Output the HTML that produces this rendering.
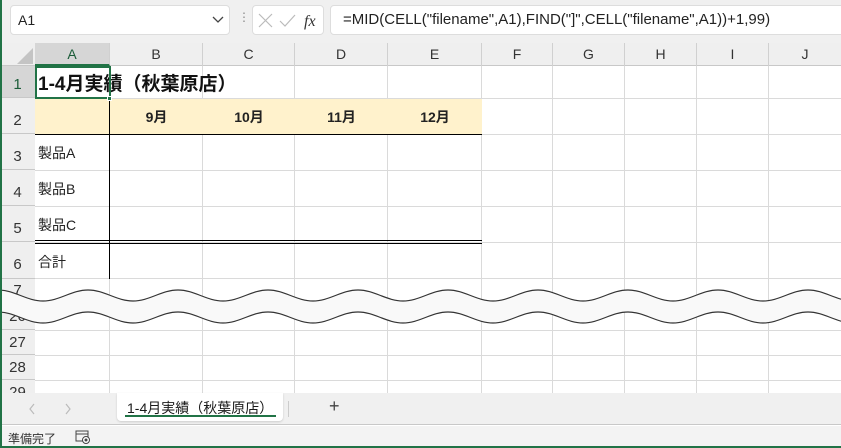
<!DOCTYPE html>
<html><head><meta charset="utf-8"><style>
*{margin:0;padding:0;box-sizing:border-box}
body{width:841px;height:448px;overflow:hidden;background:#fff;font-family:"Liberation Sans","Noto Sans CJK JP",sans-serif;position:relative}
.a{position:absolute}
.ch{position:absolute;top:43px;height:23px;font-size:14px;color:#333;text-align:center;line-height:23px;border-right:1px solid #d0d0d0}
.rh{position:absolute;left:0;width:35px;font-size:15px;color:#333;text-align:center;border-bottom:1px solid #c8c8c8;background:#efefef}
.vl{position:absolute;width:1px;background:#dadada}
.hl{position:absolute;height:1px;background:#dadada}
.t{position:absolute;font-size:14px;color:#222}
</style></head><body>
<div class="a" style="left:0;top:0;width:841px;height:43px;background:#f0f0f0"></div>
<div class="a" style="left:10px;top:5px;width:220px;height:30px;background:#fff;border:1px solid #ddd;border-radius:4px;font-size:14px;line-height:28px;padding-left:7px;color:#222">A1</div>
<svg class="a" style="left:212px;top:16px" width="12" height="8"><path d="M1 1L6 6L11 1" stroke="#444" stroke-width="1.3" fill="none"/></svg>
<div class="a" style="left:238px;top:10px;font-size:12px;color:#888">&#8942;</div>
<div class="a" style="left:252px;top:5px;width:72px;height:30px;background:#fff;border:1px solid #ddd;border-radius:4px"></div>
<svg class="a" style="left:258px;top:12px" width="60" height="18"><path d="M1 2L14 15M14 2L1 15" stroke="#bbb" stroke-width="1.2" fill="none"/><path d="M22 9L27 14L37 3" stroke="#bbb" stroke-width="1.2" fill="none"/><text x="46" y="14" font-family="Liberation Serif" font-style="italic" font-size="16" fill="#333">fx</text></svg>
<div class="a" style="left:330px;top:5px;width:520px;height:30px;background:#fff;border:1px solid #ddd;border-radius:4px;font-size:15px;line-height:28px;padding-left:12px;color:#222;white-space:nowrap">=MID(CELL("filename",A1),FIND("]",CELL("filename",A1))+1,99)</div>
<div class="a" style="left:0;top:43px;width:841px;height:23px;background:#efefef;border-bottom:1px solid #c8c8c8"></div>
<svg class="a" style="left:16px;top:47px" width="18" height="18"><path d="M17 1L17 17L1 17Z" fill="#c4c4c4"/></svg>
<div class="ch" style="left:35px;width:75px;background:#d6d6d6;color:#1a5c38;border-bottom:2px solid #217346;height:23px">A</div>
<div class="ch" style="left:110px;width:93px">B</div>
<div class="ch" style="left:203px;width:92px">C</div>
<div class="ch" style="left:295px;width:93px">D</div>
<div class="ch" style="left:388px;width:94px">E</div>
<div class="ch" style="left:482px;width:71px">F</div>
<div class="ch" style="left:553px;width:72px">G</div>
<div class="ch" style="left:625px;width:72px">H</div>
<div class="ch" style="left:697px;width:72px">I</div>
<div class="ch" style="left:769px;width:72px;border:0">J</div>
<div class="a" style="left:0;top:66px;width:35px;height:327px;background:#efefef;border-right:1px solid #c8c8c8"></div>
<div class="rh" style="top:66px;height:32px;line-height:38px;background:#d6d6d6;color:#1a5c38">1</div>
<div class="rh" style="top:98px;height:36px;line-height:46px">2</div>
<div class="rh" style="top:134px;height:36px;line-height:46px">3</div>
<div class="rh" style="top:170px;height:36px;line-height:46px">4</div>
<div class="rh" style="top:206px;height:36px;line-height:46px">5</div>
<div class="rh" style="top:242px;height:37px;line-height:46px">6</div>
<div class="rh" style="top:279px;height:51px;line-height:24px">7</div>
<div class="rh" style="top:330px;height:25px;line-height:26px">27</div>
<div class="rh" style="top:355px;height:25px;line-height:26px">28</div>
<div class="rh" style="top:380px;height:13px;line-height:26px;overflow:hidden;border:0">29</div>
<div class="a" style="left:0;top:308px;width:35px;font-size:15px;color:#333;text-align:center">26</div>
<div class="vl" style="left:202px;top:66px;height:327px"></div>
<div class="vl" style="left:294px;top:66px;height:327px"></div>
<div class="vl" style="left:387px;top:66px;height:327px"></div>
<div class="vl" style="left:481px;top:66px;height:327px"></div>
<div class="vl" style="left:552px;top:66px;height:327px"></div>
<div class="vl" style="left:624px;top:66px;height:327px"></div>
<div class="vl" style="left:696px;top:66px;height:327px"></div>
<div class="vl" style="left:768px;top:66px;height:327px"></div>
<div class="vl" style="left:109px;top:279px;height:114px"></div>
<div class="hl" style="left:35px;top:98px;width:806px"></div>
<div class="hl" style="left:35px;top:134px;width:806px"></div>
<div class="hl" style="left:35px;top:170px;width:806px"></div>
<div class="hl" style="left:35px;top:206px;width:806px"></div>
<div class="hl" style="left:35px;top:242px;width:806px"></div>
<div class="hl" style="left:35px;top:278px;width:806px"></div>
<div class="hl" style="left:35px;top:330px;width:806px"></div>
<div class="hl" style="left:35px;top:355px;width:806px"></div>
<div class="hl" style="left:35px;top:380px;width:806px"></div>
<div class="a" style="left:35px;top:99px;width:447px;height:35px;background:#fff2cc"></div>
<div class="a" style="left:35px;top:134px;width:447px;height:1px;background:#000"></div>
<div class="a" style="left:35px;top:240px;width:447px;height:1px;background:#000"></div>
<div class="a" style="left:35px;top:243px;width:447px;height:1px;background:#000"></div>
<div class="a" style="left:109px;top:99px;width:1px;height:180px;background:#000"></div>
<div class="t" style="left:38px;top:69px;font-size:19px;font-weight:bold;color:#111;white-space:nowrap">1-4月実績（秋葉原店）</div>
<div class="a" style="left:35px;top:66px;width:76px;height:33px;border:2px solid #217346"></div>
<div class="a" style="left:107px;top:96px;width:5px;height:5px;background:#217346;border:1px solid #fff"></div>
<div class="t" style="left:110px;top:107px;width:93px;text-align:center;font-weight:bold;font-size:14px">9月</div>
<div class="t" style="left:203px;top:107px;width:92px;text-align:center;font-weight:bold;font-size:14px">10月</div>
<div class="t" style="left:295px;top:107px;width:93px;text-align:center;font-weight:bold;font-size:14px">11月</div>
<div class="t" style="left:388px;top:107px;width:94px;text-align:center;font-weight:bold;font-size:14px">12月</div>
<div class="t" style="left:38px;top:143px">製品A</div>
<div class="t" style="left:38px;top:179px">製品B</div>
<div class="t" style="left:38px;top:215px">製品C</div>
<div class="t" style="left:38px;top:252px">合計</div>
<svg class="a" style="left:0;top:280px" width="841" height="50" viewBox="0 280 841 50">
<path d="M-2 290 C14.5 290 26.5 301 43 301 S71.5 290 88 290 S116.5 301 133 301 S161.5 290 178 290 S206.5 301 223 301 S251.5 290 268 290 S296.5 301 313 301 S341.5 290 358 290 S386.5 301 403 301 S431.5 290 448 290 S476.5 301 493 301 S521.5 290 538 290 S566.5 301 583 301 S611.5 290 628 290 S656.5 301 673 301 S701.5 290 718 290 S746.5 301 763 301 S791.5 290 808 290 S836.5 301 853 301 L853 323 C836.5 323 824.5 312 808 312 S779.5 323 763 323 S734.5 312 718 312 S689.5 323 673 323 S644.5 312 628 312 S599.5 323 583 323 S554.5 312 538 312 S509.5 323 493 323 S464.5 312 448 312 S419.5 323 403 323 S374.5 312 358 312 S329.5 323 313 323 S284.5 312 268 312 S239.5 323 223 323 S194.5 312 178 312 S149.5 323 133 323 S104.5 312 88 312 S59.5 323 43 323 S14.5 312 -2 312 Z" fill="#f9f9f9"/>
<path d="M-2 290 C14.5 290 26.5 301 43 301 S71.5 290 88 290 S116.5 301 133 301 S161.5 290 178 290 S206.5 301 223 301 S251.5 290 268 290 S296.5 301 313 301 S341.5 290 358 290 S386.5 301 403 301 S431.5 290 448 290 S476.5 301 493 301 S521.5 290 538 290 S566.5 301 583 301 S611.5 290 628 290 S656.5 301 673 301 S701.5 290 718 290 S746.5 301 763 301 S791.5 290 808 290 S836.5 301 853 301" fill="none" stroke="#333" stroke-width="1.2"/>
<path d="M-2 312 C14.5 312 26.5 323 43 323 S71.5 312 88 312 S116.5 323 133 323 S161.5 312 178 312 S206.5 323 223 323 S251.5 312 268 312 S296.5 323 313 323 S341.5 312 358 312 S386.5 323 403 323 S431.5 312 448 312 S476.5 323 493 323 S521.5 312 538 312 S566.5 323 583 323 S611.5 312 628 312 S656.5 323 673 323 S701.5 312 718 312 S746.5 323 763 323 S791.5 312 808 312 S836.5 323 853 323" fill="none" stroke="#333" stroke-width="1.2"/>
</svg>
<div class="a" style="left:0;top:393px;width:841px;height:32px;background:#f0f0f0;border-bottom:1px solid #c8c8c8"></div>
<svg class="a" style="left:28px;top:402px" width="50" height="14"><path d="M6 2L2 7L6 12M38 2L42 7L38 12" stroke="#bbb" stroke-width="1.2" fill="none"/></svg>
<div class="a" style="left:117px;top:393px;width:166px;height:28px;background:#fff;border-radius:0 0 4px 4px;box-shadow:0 1px 2px rgba(0,0,0,.15)"></div>
<div class="a" style="left:127px;top:398px;font-size:14px;color:#1a1a1a;white-space:nowrap">1-4月実績（秋葉原店）</div>
<div class="a" style="left:125px;top:415px;width:151px;height:2px;background:#217346"></div>
<div class="a" style="left:288px;top:401px;width:1px;height:16px;background:#ccc"></div>
<div class="a" style="left:329px;top:396px;font-size:18px;color:#444">+</div>
<div class="a" style="left:0;top:426px;width:841px;height:22px;background:#f3f3f3"></div>
<div class="a" style="left:8px;top:430px;font-size:12px;color:#333">準備完了</div>
<svg class="a" style="left:75px;top:430px" width="16" height="14"><rect x="1" y="1" width="12" height="10" fill="none" stroke="#444"/><line x1="1" y1="4" x2="13" y2="4" stroke="#444"/><circle cx="11" cy="10" r="3.5" fill="#fff" stroke="#444"/><circle cx="11" cy="10" r="1.5" fill="#444"/></svg>
<div class="a" style="left:0;top:446px;width:841px;height:2px;background:#217346"></div>
<div class="a" style="left:0;top:0;width:2px;height:448px;background:#217346"></div>
</body></html>
